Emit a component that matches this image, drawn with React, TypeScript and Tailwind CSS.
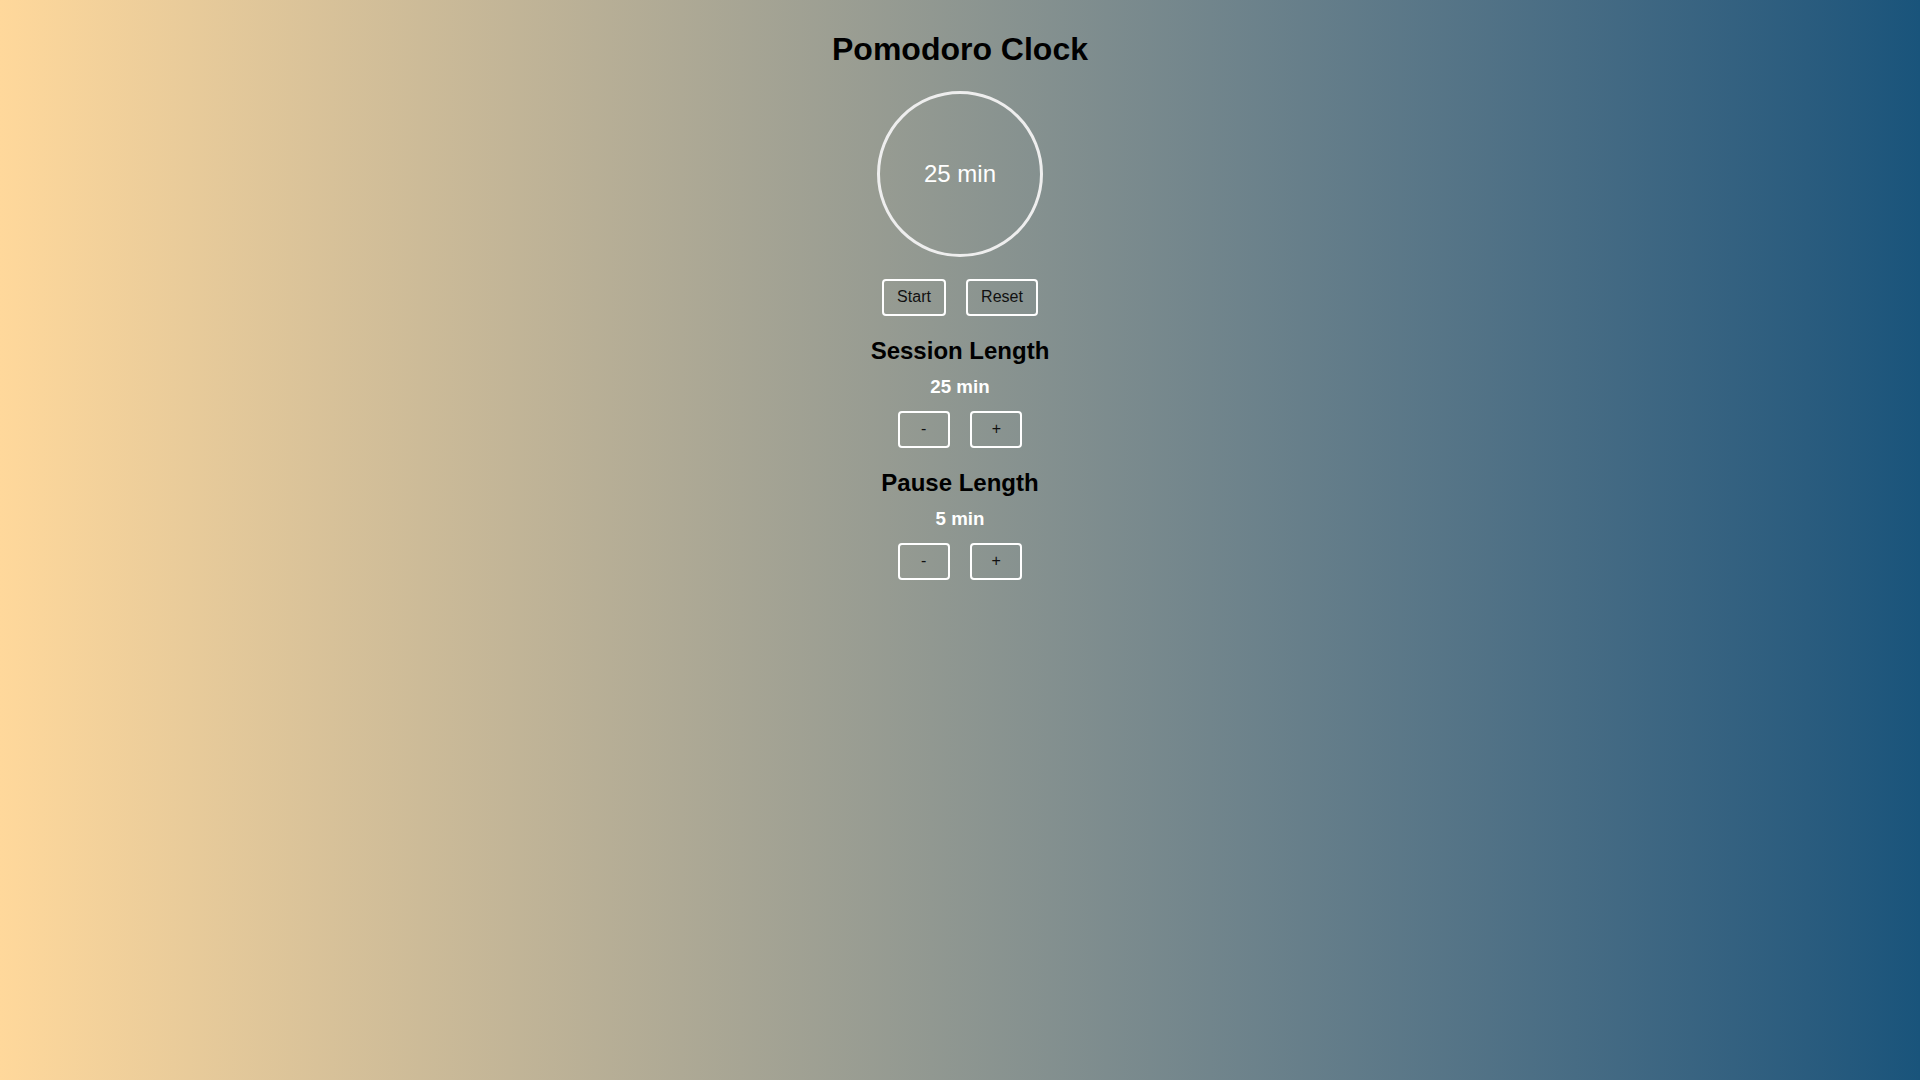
import React from "react";

function Btn({ children, w }: { children: React.ReactNode; w?: boolean }) {
  return (
    <button
      className={
        w
          ? "h-[37px] w-[52px] border-2 border-white rounded-[4px] bg-transparent text-[16px] leading-[normal] text-[#111] flex items-center justify-center"
          : "h-[37px] px-[12.8px] border-2 border-white rounded-[4px] bg-transparent text-[16px] leading-[normal] text-[#111] flex items-center justify-center"
      }
    >
      {children}
    </button>
  );
}

function Section({ title, value }: { title: string; value: string }) {
  return (
    <div className="flex flex-col items-center mt-[21.5px]">
      <h2 className="text-[24px] font-bold leading-[normal] text-black">{title}</h2>
      <h3 className="mt-[11px] text-[18.72px] font-bold leading-[normal] text-white">{value}</h3>
      <div className="mt-[12.5px] flex gap-[20.6px]">
        <Btn w>-</Btn>
        <Btn w>+</Btn>
      </div>
    </div>
  );
}

export default function App() {
  return (
    <div
      className="min-h-screen w-full bg-gradient-to-r from-[#ffd89b] to-[#19547b] flex flex-col items-center"
      style={{ fontFamily: '"Liberation Sans", Arial, sans-serif' }}
    >
      <h1 className="mt-[31px] text-[32px] font-bold leading-[normal] text-black">Pomodoro Clock</h1>
      <div className="mt-[23px] w-[166px] h-[166px] rounded-full border-[3px] border-[#eeeeee] flex items-center justify-center">
        <span className="text-[24px] leading-[normal] text-white">25 min</span>
      </div>
      <div className="mt-[21.5px] flex gap-[20.6px]">
        <Btn>Start</Btn>
        <Btn>Reset</Btn>
      </div>
      <Section title="Session Length" value="25 min" />
      <Section title="Pause Length" value="5 min" />
    </div>
  );
}
